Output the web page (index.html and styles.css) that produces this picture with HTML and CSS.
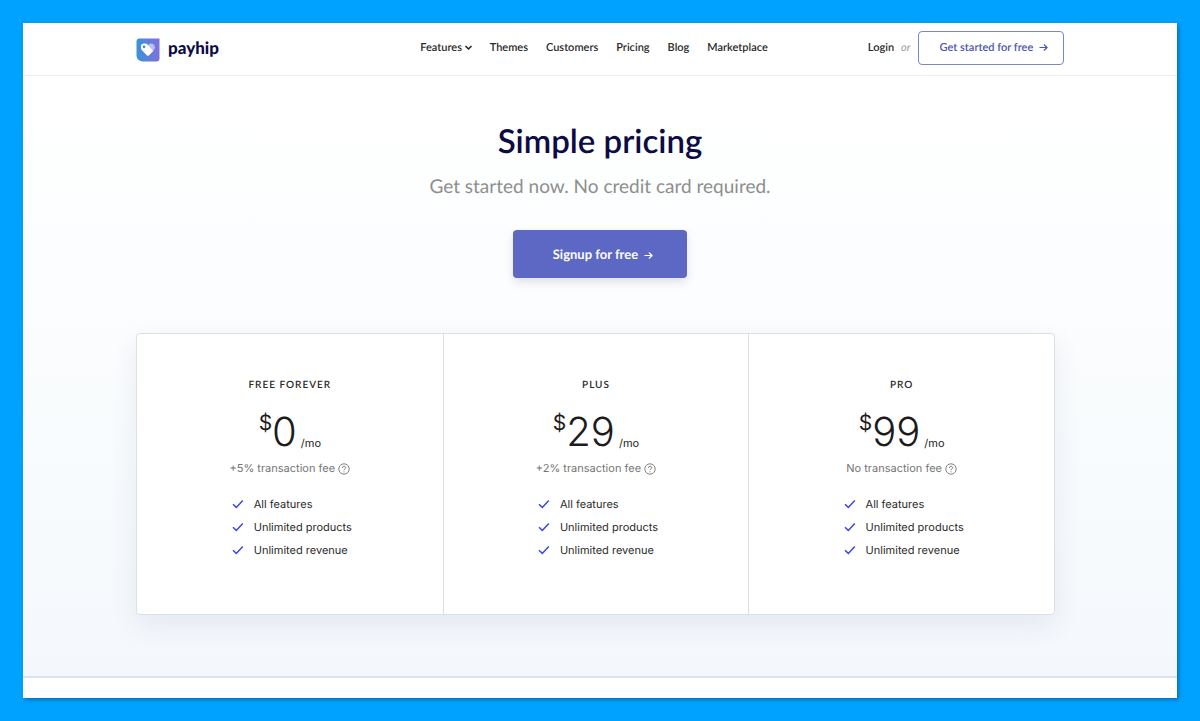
FILE: index.html
```html
<!DOCTYPE html>
<html lang="en">
<head>
  <meta charset="UTF-8" />
  <meta name="viewport" content="width=device-width, initial-scale=1.0"/>
  <title>Pricing - Payhip</title>
  <link rel="stylesheet" href="styles.css">
</head>
<body>
  <!-- shared icons -->
  <svg class="sprite" aria-hidden="true">
    <symbol id="arrow" viewBox="0 0 10 10">
      <path d="M1 5h8M5.8 2L9 5L5.8 8" fill="none" stroke="currentColor" stroke-width="1.3" stroke-linecap="round" stroke-linejoin="round"/>
    </symbol>
    <symbol id="check" viewBox="0 0 12 12">
      <path d="M1 6.3L4.3 9.4L10.8 2.4" fill="none" stroke="currentColor" stroke-width="1.5"/>
    </symbol>
    <symbol id="help" viewBox="0 0 12 12">
      <circle cx="6" cy="6" r="5.2" fill="none" stroke="currentColor" stroke-width="0.9"/>
      <path d="M4.4 4.9C4.4 2.7 7.7 2.8 7.7 4.7C7.7 5.8 6 5.9 6 7.2" fill="none" stroke="currentColor" stroke-width="1"/>
      <circle cx="6" cy="8.8" r="0.6" fill="currentColor"/>
    </symbol>
  </svg>
  <div class="page">
    <header class="header">
      <div class="container header-inner">
        <a class="logo" href="#">
          <svg width="24" height="24" viewBox="0 0 24 24" aria-hidden="true">
            <defs>
              <linearGradient id="logoFill" x1="0" y1="0" x2="1" y2="0">
                <stop offset="0" stop-color="#3a93d6"/>
                <stop offset="1" stop-color="#7f70dc"/>
              </linearGradient>
            </defs>
            <path d="M3.5 0.5H23.5V20.5A3 3 0 0 1 20.5 23.5H6.5A6 6 0 0 1 0.5 17.5V3.5A3 3 0 0 1 3.5 0.5Z" fill="url(#logoFill)"/>
            <path d="M12 7.6C13.4 5.2 16.2 5.1 17.8 6.6C19.5 8.3 19.3 10.7 17.8 12.2L15.6 14.4L9.8 9Z" fill="#bcbdf2"/>
            <path d="M5 8.2C5 6.6 6.2 5.6 7.8 5.6H9.3C10.3 5.6 11 6 11.7 6.7L17.1 12.9L12.9 17.4C12.3 18 11.6 18 11 17.4L6 12.3C5.3 11.6 5 11 5 10.1Z" fill="#fff"/>
            <circle cx="8" cy="8.8" r="1.4" fill="#5287d8"/>
          </svg>
          <span>payhip</span>
        </a>
        <nav class="nav">
          <a href="#">Features
            <svg width="7" height="6" viewBox="0 0 7 6" aria-hidden="true"><path d="M1 1.5L3.5 4L6 1.5" fill="none" stroke="currentColor" stroke-width="1.7" stroke-linecap="round" stroke-linejoin="round"/></svg>
          </a>
          <a href="#">Themes</a>
          <a href="#">Customers</a>
          <a href="#">Pricing</a>
          <a href="#">Blog</a>
          <a href="#">Marketplace</a>
        </nav>
        <div class="account">
          <a href="#">Login</a>
          <em>or</em>
          <a class="btn-outline" href="#">Get started for free <svg width="9" height="9"><use href="#arrow"/></svg></a>
        </div>
      </div>
    </header>
    <main class="hero">
      <h1>Simple pricing</h1>
      <p class="subtitle">Get started now. No credit card required.</p>
      <a class="btn-primary" href="#">Signup for free <svg width="9" height="9"><use href="#arrow"/></svg></a>
      <div class="container">
        <div class="plans">
          <section class="plan">
            <h2>Free forever</h2>
            <p class="price"><sup>$</sup><strong>0</strong><span>/mo</span></p>
            <p class="fee">+5% transaction fee <svg width="12" height="12"><use href="#help"/></svg></p>
            <ul>
              <li><svg width="12" height="12"><use href="#check"/></svg>All features</li>
              <li><svg width="12" height="12"><use href="#check"/></svg>Unlimited products</li>
              <li><svg width="12" height="12"><use href="#check"/></svg>Unlimited revenue</li>
            </ul>
          </section>
          <section class="plan">
            <h2>Plus</h2>
            <p class="price"><sup>$</sup><strong>29</strong><span>/mo</span></p>
            <p class="fee">+2% transaction fee <svg width="12" height="12"><use href="#help"/></svg></p>
            <ul>
              <li><svg width="12" height="12"><use href="#check"/></svg>All features</li>
              <li><svg width="12" height="12"><use href="#check"/></svg>Unlimited products</li>
              <li><svg width="12" height="12"><use href="#check"/></svg>Unlimited revenue</li>
            </ul>
          </section>
          <section class="plan">
            <h2>Pro</h2>
            <p class="price"><sup>$</sup><strong>99</strong><span>/mo</span></p>
            <p class="fee">No transaction fee <svg width="12" height="12"><use href="#help"/></svg></p>
            <ul>
              <li><svg width="12" height="12"><use href="#check"/></svg>All features</li>
              <li><svg width="12" height="12"><use href="#check"/></svg>Unlimited products</li>
              <li><svg width="12" height="12"><use href="#check"/></svg>Unlimited revenue</li>
            </ul>
          </section>
        </div>
      </div>
    </main>
  </div>
</body>
</html>
```
FILE: styles.css
```css
* {
  box-sizing: border-box;
}
body {
  margin: 0;
  padding: 23px;
  min-height: 100vh;
  display: flex;
  background: #00a2ff;
  font-family: Lato, "Open Sans", sans-serif;
  font-size: 11px;
  line-height: 16px;
  color: #2a2a2a;
  text-rendering: geometricPrecision;
}
h1, h2, p, ul {
  margin: 0;
  padding: 0;
}
a {
  color: inherit;
  text-decoration: none;
}
.sprite {
  position: absolute;
  width: 0;
  height: 0;
}
.page {
  flex: 1;
  display: flex;
  flex-direction: column;
  padding-bottom: 20px;
  background: #fff;
  box-shadow: 2px 2px 4px rgba(0, 40, 90, 0.4);
}
.container {
  width: 100%;
  max-width: 928px;
  margin: 0 auto;
}
.header {
  padding: 8px 0 10px;
  border-bottom: 1px solid #eeeeee;
}
.header-inner {
  display: grid;
  grid-template-columns: 1fr auto 1fr;
  align-items: center;
}
.logo {
  display: flex;
  align-items: center;
  gap: 8px;
  padding-top: 3px;
  font-size: 17px;
  line-height: 24px;
  font-weight: 900;
  color: #0c0b45;
}
.logo span {
  padding-bottom: 3px;
}
.nav {
  display: flex;
  gap: 18px;
  margin-right: 12px;
  font-weight: 600;
}
.account {
  display: flex;
  align-items: center;
  justify-content: flex-end;
  gap: 7px;
  font-weight: 600;
}
.account em {
  font-weight: 400;
  color: #999;
}
.btn-outline {
  padding: 8px 15px 8px 21px;
  border: 1px solid #7c86c9;
  border-radius: 4px;
  color: #4a54b5;
}
.btn-outline svg,
.btn-primary svg {
  margin-left: 3px;
  vertical-align: -1px;
}
.hero {
  flex: 1;
  display: flex;
  flex-direction: column;
  align-items: center;
  padding: 45px 0 60px;
  background: linear-gradient(#fff, #fbfdfe 40%, #f4f8fc);
  border-bottom: 2px solid #dbe4ee;
}
h1 {
  font-size: 33px;
  line-height: 40px;
  font-weight: 600;
  color: #0c0b45;
}
.subtitle {
  margin-top: 14px;
  font-size: 19px;
  line-height: 24px;
  color: #8e8e8e;
}
.btn-primary {
  margin: 31px 0 55px;
  padding: 16px 34px 16px 40px;
  border-radius: 4px;
  background: #5c68c3;
  box-shadow: 0 4px 10px rgba(50, 50, 93, 0.14);
  font-size: 13px;
  font-weight: 700;
  color: #fff;
}
.plans {
  display: grid;
  grid-template-columns: repeat(3, 1fr);
  margin-right: 9px;
  border: 1px solid #d9e1e8;
  border-radius: 4px;
  background: #fff;
  box-shadow: 0 10px 28px rgba(50, 60, 110, 0.09);
  font-family: Inter, "Open Sans", sans-serif;
}
.plan {
  display: flex;
  flex-direction: column;
  align-items: center;
  padding: 43px 16px 56px;
}
.plan + .plan {
  border-left: 1px solid #d9e1e8;
}
.plan h2 {
  font-family: Lato, "Open Sans", sans-serif;
  font-size: 10px;
  line-height: 16px;
  font-weight: 600;
  letter-spacing: 1px;
  text-transform: uppercase;
}
.price {
  display: flex;
  align-items: flex-end;
  margin-top: 15px;
  color: #1c1c1c;
}
.price sup {
  align-self: flex-start;
  font-size: 21px;
  line-height: 32px;
}
.price strong {
  font-size: 40px;
  line-height: 48px;
  font-weight: 300;
}
.price span {
  margin: 0 0 5px 4px;
}
.fee {
  margin-top: 4px;
  color: #757575;
}
.fee svg {
  vertical-align: -3px;
}
.plan ul {
  display: flex;
  flex-direction: column;
  gap: 7px;
  margin: 20px 0 0 4px;
  list-style: none;
}
.plan li {
  display: flex;
  align-items: center;
  gap: 10px;
}
.plan li svg {
  color: #3d46e0;
}
```
